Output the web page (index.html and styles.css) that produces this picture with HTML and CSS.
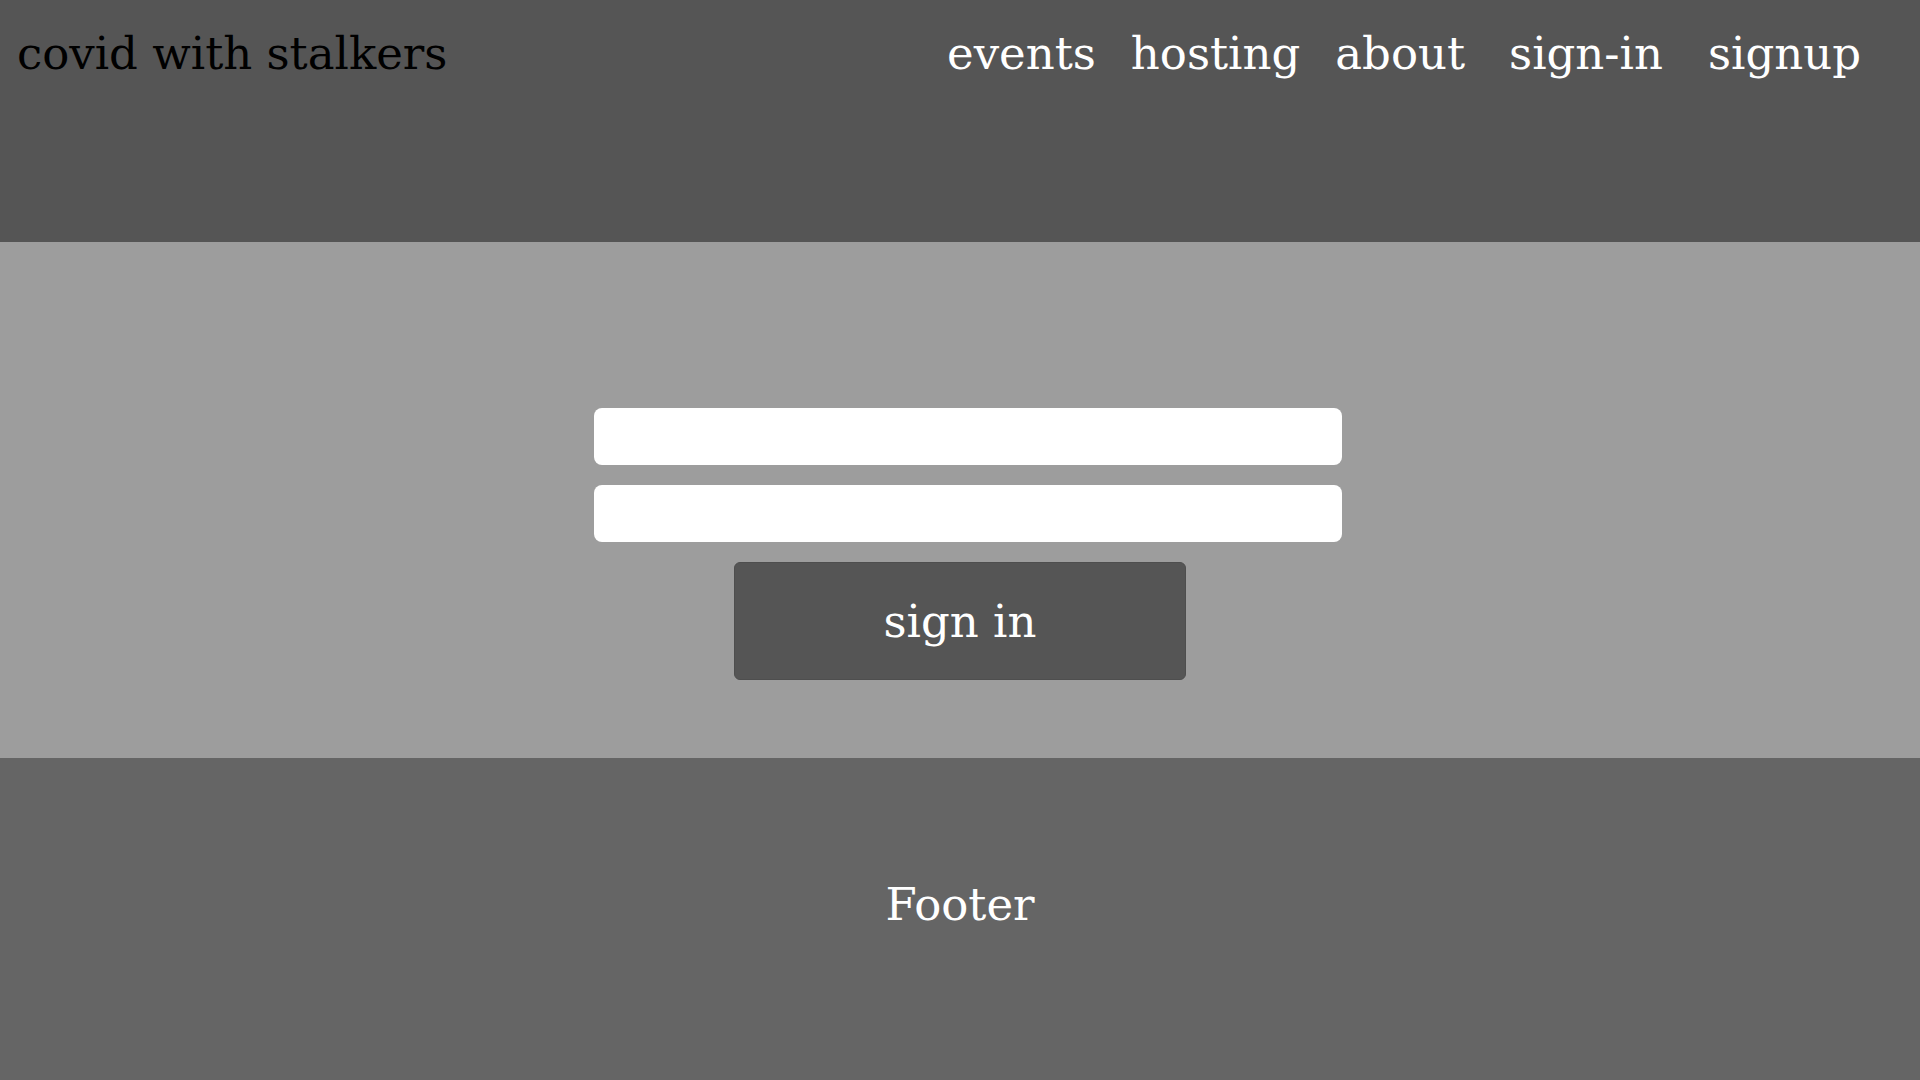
FILE: index.html
```html
<!DOCTYPE html>
<html lang="en">
<head>
<meta charset="utf-8">
<title>covid with stalkers</title>
<link rel="stylesheet" href="styles.css">
</head>
<body>
<header class="site-header">
  <div class="logo">covid with stalkers</div>
  <nav class="nav">
    <div class="nav-main">
      <a class="nav-link" href="#">events</a>
      <a class="nav-link" href="#">hosting</a>
      <a class="nav-link" href="#">about</a>
    </div>
    <div class="nav-auth">
      <a class="nav-link" href="#">sign-in</a>
      <a class="nav-link" href="#">signup</a>
    </div>
  </nav>
</header>
<main class="content">
  <form class="signin-form">
    <input class="field" type="text">
    <input class="field" type="password">
    <button class="signin-btn" type="button">sign in</button>
  </form>
</main>
<footer class="site-footer">Footer</footer>
</body>
</html>
```
FILE: styles.css
```css
* { box-sizing: border-box; }
html, body { margin: 0; padding: 0; }
body {
  font-family: "DejaVu Serif", "Liberation Serif", serif;
  font-size: 45px;
  background: #656565;
}
.site-header {
  height: 242px;
  background: #555555;
  display: flex;
  justify-content: space-between;
  align-items: flex-start;
  padding: 27px 59px 0 17px;
}
.logo {
  color: #000;
}
.nav {
  display: flex;
  gap: 44px;
}
.nav-main, .nav-auth {
  display: flex;
}
.nav-main { gap: 35px; }
.nav-auth { gap: 45px; }
.nav-link {
  color: #fff;
  text-decoration: none;
}
.content {
  height: 516px;
  background: #9d9d9d;
  padding-top: 166px;
}
.signin-form {
  display: flex;
  flex-direction: column;
  align-items: center;
}
.field {
  display: block;
  width: 748px;
  height: 57px;
  border: none;
  border-radius: 8px;
  background: #fff;
  margin: 0 0 20px 16px;
  outline: none;
}
.signin-btn {
  width: 452px;
  height: 118px;
  background: #555555;
  border: 1px solid #4e4e4e;
  border-radius: 6px;
  color: #fff;
  font-family: inherit;
  font-size: 45px;
  padding: 0;
}
.site-footer {
  height: 322px;
  background: #656565;
  color: #fff;
  text-align: center;
  padding-top: 120px;
}
```
